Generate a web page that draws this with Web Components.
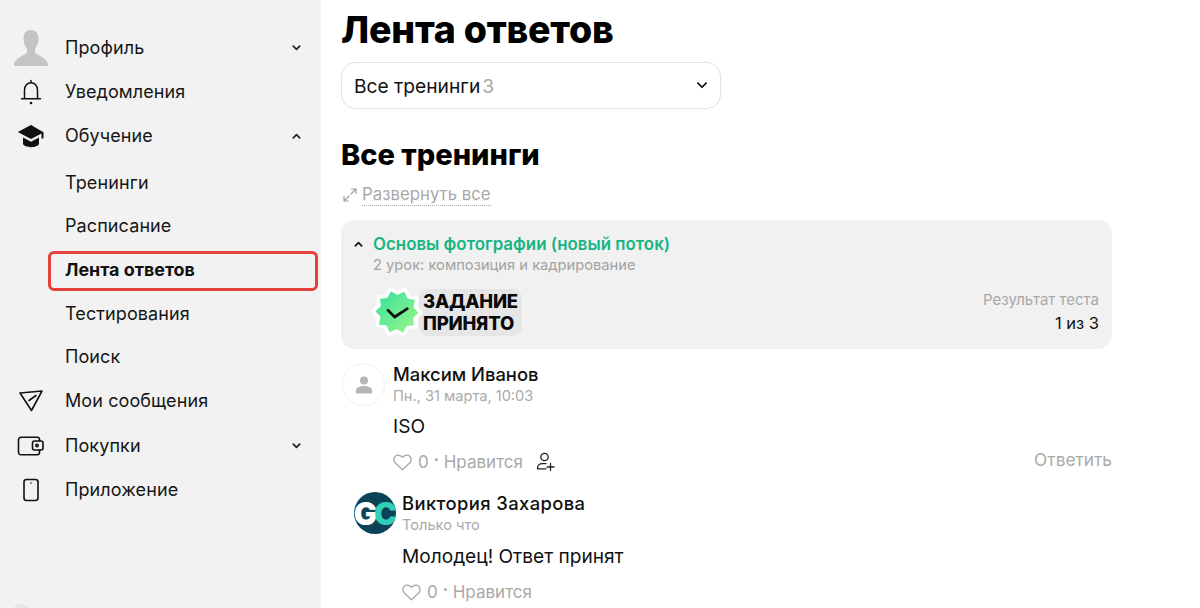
<!DOCTYPE html>
<html lang="ru">
<head>
<meta charset="utf-8">
<title>Лента ответов</title>
<style>
  html, body { margin: 0; height: 608px; overflow: hidden; background: #fff; }
  body { font-family: Inter, "Noto Sans", sans-serif; color: #111; }
</style>
</head>
<body>

<app-shell>
  <side-nav slot="side">
    <nav-item label="Профиль" chevron="down">
      <svg slot="icon" width="36" height="38" viewBox="0 0 36 38"><path fill="#c4c4c4" d="M18 1c-5 0-7.500 3.500-7.500 8.500 0 4 1.500 8 3.500 10.500v3.500C12 26.500 3 28 1 35c-.3 1 .3 2 1.500 2h31c1.200 0 1.800-1 1.500-2-2-7-11-8.500-13-11.500V20c2-2.500 3.500-6.500 3.500-10.500C25.500 4.500 23 1 18 1z"/></svg>
    </nav-item>
    <nav-item label="Уведомления">
      <svg slot="icon" width="24" height="26" viewBox="0 0 24 26" fill="none" stroke="#111" stroke-width="1.500" stroke-linecap="round" stroke-linejoin="round"><path d="M12 1.500v2.300M5.500 19.500V11c0-4.200 2.800-7.200 6.500-7.200s6.500 3 6.500 7.200v8.500M2.500 19.800h19"/><circle cx="12" cy="24" r=".6" fill="#111"/></svg>
    </nav-item>
    <nav-item label="Обучение" chevron="up">
      <svg slot="icon" width="28" height="24" viewBox="0 0 28 24"><path fill="#111" d="M14 1 .8 8 14 15l10.500-5.600v5h2V8.200z"/><path fill="#111" d="M6 13.500v6c0 1.900 3.600 3.700 8 3.700s8-1.800 8-3.700v-6L14 17.800z"/></svg>
    </nav-item>
    <nav-item sub first label="Тренинги"></nav-item>
    <nav-item sub label="Расписание"></nav-item>
    <nav-item sub active label="Лента ответов"></nav-item>
    <nav-item sub label="Тестирования"></nav-item>
    <nav-item sub label="Поиск"></nav-item>
    <nav-item tall label="Мои сообщения">
      <svg slot="icon" width="26" height="24" viewBox="0 0 26 24" fill="none" stroke="#111" stroke-width="1.600" stroke-linecap="round" stroke-linejoin="round"><path d="M2 4 24 2 13.500 21.500z"/><path d="M11 11.500 18 6.500"/></svg>
    </nav-item>
    <nav-item label="Покупки" chevron="down">
      <svg slot="icon" width="28" height="20" viewBox="0 0 28 20" fill="none" stroke="#111" stroke-width="1.600" stroke-linecap="round" stroke-linejoin="round"><path d="M22.500 5V3.500a2.200 2.200 0 0 0-2.200-2.200H4a2.500 2.500 0 0 0-2.500 2.500v12.400A2.500 2.500 0 0 0 4 18.700h16.300a2.200 2.200 0 0 0 2.200-2.200V14"/><rect x="15.500" y="5" width="10.500" height="9" rx="2"/><circle cx="20" cy="9.500" r="1.200"/></svg>
    </nav-item>
    <nav-item label="Приложение">
      <svg slot="icon" width="18" height="24" viewBox="0 0 18 24" fill="none" stroke="#111" stroke-width="1.600"><rect x="2" y="1.500" width="14" height="21" rx="2.500"/><circle cx="9" cy="5" r=".8" fill="#111" stroke="none"/></svg>
    </nav-item>
  </side-nav>

  <feed-page>
    <training-card slot="card" title="Основы фотографии (новый поток)" lesson="2 урок: композиция и кадрирование" score="1 из 3"></training-card>
    <comment-item name="Максим Иванов" time="Пн., 31 марта, 10:03" text="ISO" reply>
      <user-avatar slot="avatar"></user-avatar>
    </comment-item>
    <comment-item nested name="Виктория Захарова" time="Только что" text="Молодец! Ответ принят">
      <user-avatar slot="avatar" logo></user-avatar>
    </comment-item>
  </feed-page>
</app-shell>

<script>
  const CHEVRON = dir => `<svg width="9" height="6" viewBox="0 0 10 6" fill="none" stroke="currentColor" stroke-width="1.900" stroke-linecap="round" stroke-linejoin="round"><path d="${dir === 'up' ? 'M1.500 5 5 1.500 8.500 5' : 'M1.500 1 5 4.500 8.500 1'}"/></svg>`;

  // ten-pointed seal behind the "task accepted" badge
  function sealPoints(cx, cy, outer, inner, peaks) {
    const pts = [];
    for (let i = 0; i < peaks * 2; i++) {
      const r = i % 2 ? inner : outer;
      const a = (i * Math.PI) / peaks - 1.85;
      pts.push((cx + r * Math.cos(a)).toFixed(1) + ',' + (cy + r * Math.sin(a)).toFixed(1));
    }
    return pts.join(' ');
  }

  function defineElement(tag, html, extra) {
    const template = document.createElement('template');
    template.innerHTML = html;
    customElements.define(tag, class extends HTMLElement {
      constructor() {
        super();
        this.attachShadow({mode: 'open'});
        this.shadowRoot.appendChild(template.content.cloneNode(true));
      }
      connectedCallback() {
        this.shadowRoot.querySelectorAll('[data-text]').forEach(el => {
          el.textContent = this.getAttribute(el.dataset.text) || '';
        });
        if (extra) extra.call(this);
      }
    });
  }

  defineElement('app-shell', `
    <style>
      :host { display: grid; grid-template-columns: 321px 1fr; height: 608px; overflow: hidden; }
    </style>
    <slot name="side"></slot>
    <slot></slot>
  `);

  defineElement('side-nav', `
    <style>
      :host { display: flex; flex-direction: column; background: #f2f2f2; height: 608px; padding-top: 26px; box-sizing: border-box; position: relative; overflow: hidden; }
      .dot { position: absolute; left: 12px; bottom: -14px; width: 18px; height: 18px; border-radius: 50%; background: #e6e6e6; }
    </style>
    <slot></slot>
    <div class="dot"></div>
  `);

  defineElement('nav-item', `
    <style>
      :host { display: flex; align-items: center; height: 44px; position: relative; font-size: 18px; letter-spacing: .1px; color: #161616; flex: none; }
      :host([sub]) { height: 43.600px; }
      :host([first]) { margin-top: 3px; }
      :host([tall]) { height: 45px; }
      .icon { width: 65px; flex: none; display: flex; justify-content: center; box-sizing: border-box; padding-right: 3px; }
      .label { flex: 1; padding-bottom: 1px; }
      .chev { width: 10px; margin-right: 19px; display: flex; color: #222; }
      :host([active]) .label { font-weight: 700; color: #111; letter-spacing: 0; font-size: 17.900px; }
      :host([active])::after { content: ""; position: absolute; left: 48px; right: 3px; top: 3px; bottom: 1px; border: 3px solid #e5403a; border-radius: 6px; }
    </style>
    <div class="icon"><slot name="icon"></slot></div>
    <div class="label" data-text="label"></div>
    <div class="chev"></div>
  `, function() {
    const dir = this.getAttribute('chevron');
    if (dir) this.shadowRoot.querySelector('.chev').innerHTML = CHEVRON(dir);
  });

  defineElement('select-box', `
    <style>
      :host { display: flex; align-items: center; width: 380px; height: 47px; box-sizing: border-box; border: 1.500px solid #e2e2e2; border-radius: 14px; padding: 0 12px 0 12px; font-size: 19.200px; color: #111; background: #fff; }
      .count { color: #a8a8a8; margin-left: 2px; flex: 1; }
      svg { color: #111; }
    </style>
    <span>Все тренинги</span><span class="count">3</span>
    <svg width="12" height="7" viewBox="0 0 10 6" fill="none" stroke="currentColor" stroke-width="1.500" stroke-linecap="round" stroke-linejoin="round"><path d="M1.500 1 5 4.500 8.500 1"/></svg>
  `);

  defineElement('feed-page', `
    <style>
      :host { display: block; padding-left: 20px; padding-right: 88px; height: 608px; overflow: hidden; box-sizing: border-box; }
      h1 { margin: 8px 0 0; font-size: 37.500px; line-height: 44px; font-weight: 800; letter-spacing: -.2px; color: #000; }
      select-box { margin-top: 10px; }
      h2 { margin: 26px 0 0; font-size: 29px; line-height: 40px; font-weight: 800; color: #000; }
      .expand { display: flex; align-items: center; gap: 5px; height: 26px; margin-top: 7px; font-size: 16.800px; color: #a9a9a9; }
      .expand span { border-bottom: 1.500px dotted #a9a9a9; line-height: 21px; }
      .expand svg { margin-left: 2px; }
      .card { margin-top: 12px; }
    </style>
    <h1>Лента ответов</h1>
    <select-box></select-box>
    <h2>Все тренинги</h2>
    <div class="expand">
      <svg width="14" height="14" viewBox="0 0 14 14" fill="none" stroke="#a0a0a0" stroke-width="1.200" stroke-linecap="round" stroke-linejoin="round"><path d="M8.500 1h4.500v4.500M13 1 8 6M5.500 13H1V8.500M1 13l5-5"/></svg>
      <span>Развернуть все</span>
    </div>
    <div class="card"><slot name="card"></slot></div>
    <slot></slot>
  `);

  defineElement('training-card', `
    <style>
      :host { display: block; height: 129px; box-sizing: border-box; background: #f1f1f1; border-radius: 14px; padding: 14px 13px 0 13px; }
      .head { display: flex; align-items: center; gap: 10px; height: 20px; }
      .head svg { color: #111; flex: none; }
      .title { color: #17b583; font-size: 16.900px; font-weight: 600; }
      .lesson { margin: 1px 0 0 19px; font-size: 14.700px; line-height: 20px; color: #a2a2a2; }
      .foot { display: flex; justify-content: space-between; align-items: flex-start; margin-top: 10px; padding-left: 18px; }
      .res { text-align: right; margin-top: 5px; }
      .res-label { font-size: 15px; line-height: 20px; color: #a8a8a8; }
      .res-score { font-size: 16.500px; line-height: 20px; margin-top: 3px; color: #111; }
    </style>
    <div class="head">
      ${CHEVRON('up')}
      <div class="title" data-text="title"></div>
    </div>
    <div class="lesson" data-text="lesson"></div>
    <div class="foot">
      <done-badge></done-badge>
      <div class="res">
        <div class="res-label">Результат теста</div>
        <div class="res-score" data-text="score"></div>
      </div>
    </div>
  `);

  defineElement('done-badge', `
    <style>
      :host { display: flex; align-items: center; height: 54px; }
      svg { flex: none; position: relative; z-index: 1; margin-right: -3px; overflow: visible; }
      .txt { background: #e6e6e6; border-radius: 9px; padding: 1px 4px 1px 4px; font-size: 18.500px; line-height: 22.500px; font-weight: 800; letter-spacing: -.2px; color: #0a0a0a; }
    </style>
    <svg width="50" height="54" viewBox="0 0 50 54">
      <defs><linearGradient id="g" x1="0" y1="0" x2="1" y2="1"><stop offset="0" stop-color="#2fdf9f"/><stop offset="1" stop-color="#a4f888"/></linearGradient></defs>
      <polygon fill="url(#g)" stroke="#fff" stroke-width="3.500" stroke-linejoin="round" points="${sealPoints(25, 27, 24, 19, 10)}"/>
      <path d="M16 25.300 22.700 32 35.300 23.700" fill="none" stroke="#111" stroke-width="2.800" stroke-linecap="round" stroke-linejoin="round"/>
    </svg>
    <div class="txt">ЗАДАНИЕ<br>ПРИНЯТО</div>
  `);

  defineElement('user-avatar', `
    <style>
      :host { display: block; width: 43px; height: 43px; border-radius: 50%; box-sizing: border-box; border: 1px solid #f0f0f0; overflow: hidden; position: relative; flex: none; }
      :host([logo]) { border: 0; background: #0d4358; width: 42px; height: 42px; }
      .gc { display: none; align-items: center; justify-content: center; height: 100%; font-size: 31px; font-weight: 900; letter-spacing: -3px; color: #fff; margin-left: -2px; }
      .gc b { color: #2fd0b5; font-weight: 900; }
      :host([logo]) .gc { display: flex; }
      :host([logo]) .person { display: none; }
      .person { display: flex; align-items: center; justify-content: center; height: 100%; }
    </style>
    <div class="person"><svg width="18" height="18" viewBox="0 0 18 18" fill="#b6b6b6"><circle cx="9" cy="4.500" r="4"/><path d="M1 17.500V14c0-2.400 3.500-4 8-4s8 1.600 8 4v3.500z"/></svg></div>
    <div class="gc">G<b>C</b></div>
  `);

  defineElement('comment-item', `
    <style>
      :host { display: grid; grid-template-columns: 43px 1fr; column-gap: 8px; margin: 14px 0 0 1px; height: 112px; position: relative; }
      :host([nested]) { margin: 17px 0 0 13px; column-gap: 6px; grid-template-columns: 42px 1fr; height: 120px; }
      .name { font-size: 18.400px; line-height: 22px; font-weight: 500; color: #111; margin-top: 0; }
      :host([nested]) .name { letter-spacing: .4px; }
      .time { font-size: 14.600px; line-height: 20px; color: #aaa; margin-top: 1px; }
      .text { font-size: 19.100px; line-height: 24px; margin-top: 8px; color: #111; }
      :host([nested]) .text { margin-top: 9px; }
      .bar { display: flex; align-items: center; margin-top: 13px; height: 22px; font-size: 17px; color: #a9a9a9; }
      .bar .heart { margin-right: 6px; }
      .dot { width: 3px; height: 3px; margin: -6px 6px 0 6px; border-radius: 50%; background: #aaa; }
      .add { margin-left: 13px; display: none; }
      .reply { display: none; position: absolute; right: 0; top: 86px; font-size: 17.300px; color: #a9a9a9; }
      :host([reply]) .add, :host([reply]) .reply { display: block; }
    </style>
    <slot name="avatar"></slot>
    <div>
      <div class="name" data-text="name"></div>
      <div class="time" data-text="time"></div>
      <div class="text" data-text="text"></div>
      <div class="bar">
        <svg class="heart" width="19" height="17" viewBox="0 0 19 17" fill="none" stroke="#aaa" stroke-width="1.400" stroke-linejoin="round"><path d="M9.500 15.800 2.600 9.200C.4 7 .5 4 2.300 2.300 4.100.6 7.200.7 9.500 3.300c2.300-2.600 5.400-2.700 7.200-1 1.800 1.700 1.900 4.700-.3 6.900z"/></svg>
        <span>0</span><span class="dot"></span><span>Нравится</span>
        <svg class="add" width="20" height="20" viewBox="0 0 20 20" fill="none" stroke="#222" stroke-width="1.300" stroke-linecap="round" stroke-linejoin="round"><circle cx="8.500" cy="5" r="3.700"/><path d="M1.500 16.500c0-3 1.500-4.800 5-4.800h3.500M1.500 16.800h8.500M14.500 11.500v7M11 15h7"/></svg>
      </div>
    </div>
    <div class="reply">Ответить</div>
  `);
</script>
</body>
</html>
